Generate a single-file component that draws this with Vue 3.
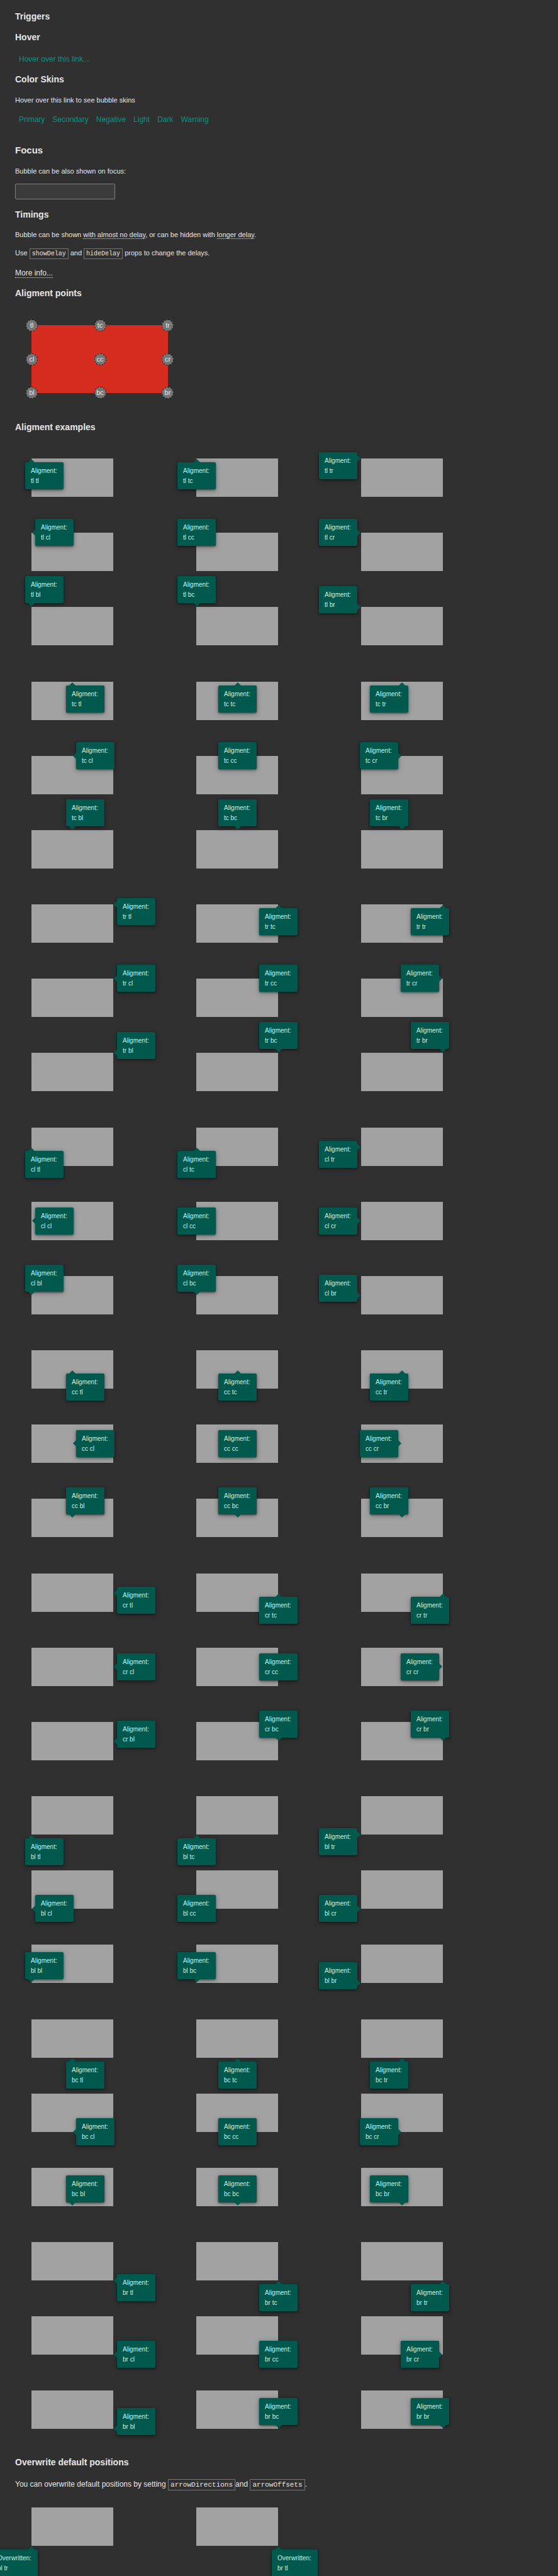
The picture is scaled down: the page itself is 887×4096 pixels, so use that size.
<script setup>
const points = ['tl', 'tc', 'tr', 'cl', 'cc', 'cr', 'bl', 'bc', 'br']
const skins = ['Primary', 'Secondary', 'Negative', 'Light', 'Dark', 'Warning']

// Side of the bubble that carries the arrow, for a target point and a bubble point.
function arrowSide(target, own) {
  const [v, h] = own
  if (own === 'cc') return 'none'
  if (v === 'c') return h === 'l' ? 'left' : 'right'
  if (target[1] === 'l' && h === 'r') return 'right'
  if (target[1] === 'r' && h === 'l') return 'left'
  return v === 't' ? 'top' : 'bottom'
}

function bubbleClasses(target, own) {
  return ['arrow-' + arrowSide(target, own), 'v-' + own[0], 'h-' + own[1]]
}

const overwritten = [
  { target: 'bl', own: 'tr' },
  { target: 'br', own: 'tl' },
]
</script>

<template>
  <main class="page">
    <h2>Triggers</h2>
    <h3>Hover</h3>
    <div class="links single"><a href="#hover">Hover over this link...</a></div>

    <h3>Color Skins</h3>
    <p>Hover over this link to see bubble skins</p>
    <nav class="links">
      <a v-for="s in skins" :key="s" :href="'#' + s.toLowerCase()">{{ s }}</a>
    </nav>

    <h2 class="large">Focus</h2>
    <label class="text" for="focus-field">Bubble can be also shown on focus:</label>
    <input id="focus-field" class="field" type="text" />

    <h3>Timings</h3>
    <p class="lead">Bubble can be shown <a class="hint" href="#fast">with almost no delay</a>, or can be hidden with <a class="hint" href="#slow">longer delay</a>.</p>
    <p class="close">Use <code>showDelay</code> and <code>hideDelay</code> props to change the delays.</p>
    <p class="body"><a class="hint" href="#more">More info...</a></p>

    <h3>Aligment points</h3>
    <div class="points">
      <span v-for="p in points" :key="p" class="point" :class="['pv-' + p[0], 'ph-' + p[1]]">{{ p }}</span>
    </div>

    <h3 class="after-points">Aligment examples</h3>
    <div class="examples">
      <div v-for="t in points" :key="t" class="group">
        <div v-for="o in points" :key="o" class="target">
          <div class="anchor" :class="['av-' + t[0], 'ah-' + t[1]]">
            <div class="bubble" :class="bubbleClasses(t, o)">Aligment:<br />{{ t }} {{ o }}</div>
          </div>
        </div>
      </div>
    </div>

    <h3 class="after-examples">Overwrite default positions</h3>
    <p class="body wide">You can overwrite default positions by setting <code>arrowDirections</code>and <code>arrowOffsets</code>.</p>
    <div class="group last">
      <div v-for="b in overwritten" :key="b.target" class="target">
        <div class="anchor" :class="['av-' + b.target[0], 'ah-' + b.target[1]]">
          <div class="bubble big arrow-top" :class="['v-' + b.own[0], 'h-' + b.own[1]]">Overwritten:<br />{{ b.target }} {{ b.own }}</div>
        </div>
      </div>
    </div>
  </main>
</template>

<style>
html,
body {
  margin: 0;
  background: #303030;
}
</style>

<style scoped>
.page {
  box-sizing: border-box;
  min-height: 100vh;
  padding: 17px 24px 48px;
  overflow: hidden;
  background: #303030;
  color: #e6e6e6;
  font-family: "Liberation Sans", Arial, sans-serif;
  font-size: 11px;
  line-height: 16px;
}
h2,
h3 {
  margin: 15px 0 0;
  font-size: 14px;
  line-height: 18px;
  font-weight: bold;
}
h2:first-child {
  margin-top: 0;
}
h2.large {
  margin-top: 32px;
  font-size: 15px;
}
p,
.text {
  display: block;
  margin: 16px 0 0;
}
p.lead {
  margin-top: 15px;
}
p.close {
  margin-top: 13px;
}
.body {
  font-size: 12px;
}
.body.wide {
  margin-top: 18px;
}
.links {
  display: flex;
  gap: 12px;
  margin-top: 15px;
  padding: 0 6px;
  font-size: 12px;
}
.links.single {
  margin-top: 18px;
}
.links a {
  color: #009680;
  text-decoration: none;
}
.hint {
  color: inherit;
  text-decoration: none;
  border-bottom: 1px dotted #e6e6e6;
}
.field {
  display: block;
  box-sizing: border-box;
  width: 159px;
  height: 25px;
  margin-top: 12px;
  padding: 0 6px;
  border: 1px solid #808080;
  border-radius: 2px;
  background: #3b3b3b;
  color: #e6e6e6;
  font: inherit;
}
code {
  padding: 2px 3px;
  border: 1px solid #757575;
  font-family: "Liberation Mono", "Courier New", monospace;
  font-size: 10px;
  line-height: 1;
}
.body code {
  font-size: 11px;
}

.points {
  position: relative;
  width: 217px;
  height: 108px;
  margin: 42px 0 0 26px;
  background: #d62b1f;
}
.point {
  position: absolute;
  box-sizing: border-box;
  width: 19px;
  height: 19px;
  border: 1px dashed #111;
  border-radius: 50%;
  background: #757575;
  line-height: 17px;
  text-align: center;
}
.pv-t { top: -9px; }
.pv-c { top: calc(50% - 9px); }
.pv-b { bottom: -9px; }
.ph-l { left: -9px; }
.ph-c { left: calc(50% - 9px); }
.ph-r { right: -9px; }

.after-points {
  margin-top: 45px;
}
.after-examples {
  margin-top: 44px;
}
.examples {
  display: flex;
  flex-direction: column;
  gap: 57px;
  margin-top: 41px;
}
.group {
  display: grid;
  grid-template-columns: repeat(3, 130px);
  grid-auto-rows: 61px;
  gap: 57px 132px;
  padding-left: 26px;
}
.group:nth-child(even) {
  padding-top: 1px;
}
.group.last {
  margin-top: 29px;
  padding-top: 0;
}
.target {
  position: relative;
  background: #a2a2a2;
}
.anchor {
  position: absolute;
  z-index: 1;
  width: 0;
  height: 0;
}
.av-t { top: 0; }
.av-c { top: 50%; }
.av-b { top: 100%; }
.ah-l { left: 0; }
.ah-c { left: 50%; }
.ah-r { left: 100%; }

.bubble {
  position: absolute;
  box-sizing: border-box;
  width: 61px;
  height: 43px;
  padding: 6px 9px 5px;
  border-radius: 2px;
  background: #00594c;
  box-shadow: 0 1px 3px rgba(0, 0, 0, 0.5), 0 2px 8px rgba(0, 0, 0, 0.3);
  color: #c4f2e8;
  font-size: 10px;
  white-space: nowrap;
}
.bubble.big {
  width: 73px;
}
.bubble.v-t { top: 6px; }
.bubble.v-c { top: -22px; }
.bubble.v-b { bottom: 6px; }
.bubble.h-l { left: -10px; }
.bubble.h-c { left: -30px; }
.bubble.h-r { right: -10px; }
.bubble.arrow-left { left: 6px; }
.bubble.arrow-right { right: 6px; }
.bubble.arrow-left.v-t,
.bubble.arrow-right.v-t { top: -10px; }
.bubble.arrow-left.v-b,
.bubble.arrow-right.v-b { bottom: -10px; }

.bubble::after {
  content: "";
  position: absolute;
  border: 5px solid transparent;
}
.arrow-none::after { display: none; }
.arrow-top::after { bottom: 100%; border-bottom-color: #00594c; }
.arrow-bottom::after { top: 100%; border-top-color: #00594c; }
.arrow-left::after { right: 100%; border-right-color: #00594c; }
.arrow-right::after { left: 100%; border-left-color: #00594c; }
.arrow-top.h-l::after,
.arrow-bottom.h-l::after { left: 5px; }
.arrow-top.h-c::after,
.arrow-bottom.h-c::after { left: calc(50% - 5px); }
.arrow-top.h-r::after,
.arrow-bottom.h-r::after { right: 5px; }
.arrow-left.v-t::after,
.arrow-right.v-t::after { top: 5px; }
.arrow-left.v-c::after,
.arrow-right.v-c::after { top: calc(50% - 5px); }
.arrow-left.v-b::after,
.arrow-right.v-b::after { bottom: 5px; }
</style>
